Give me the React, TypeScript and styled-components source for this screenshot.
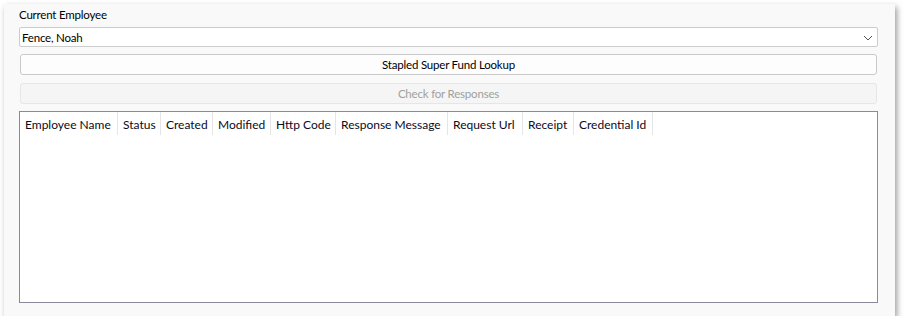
import React from "react";
import styled, { createGlobalStyle } from "styled-components";

const GlobalStyle = createGlobalStyle`
  html, body {
    margin: 0;
    padding: 0;
    background: #ffffff;
  }
  body {
    font-family: "Segoe UI", Lato, "Noto Sans", sans-serif;
    font-size: 11.5px;
    letter-spacing: -0.2px;
    color: #000000;
  }
`;

const Window = styled.div`
  box-sizing: border-box;
  margin: 4px 0 0 4px;
  width: 891px;
  height: 312px;
  background: #f9f9f9;
  box-shadow: 2px 3px 6px rgba(0, 0, 0, 0.4);
  padding: 3px 17px 13px 15px;
  display: flex;
  flex-direction: column;
`;

const Label = styled.div`
  line-height: 16px;
  height: 16px;
  margin-bottom: 4px;
  color: #000;
`;

const Combo = styled.div`
  box-sizing: border-box;
  height: 20px;
  border: 1px solid #cccccc;
  border-radius: 2px;
  background: #ffffff;
  display: flex;
  align-items: center;
  justify-content: space-between;
  padding: 1px 3px 0 2px;
  margin-bottom: 7px;
  line-height: 16px;
`;

const Chevron = styled.svg`
  width: 10px;
  height: 6px;
  margin-right: 1px;
`;

const Button = styled.div<{ $disabled?: boolean }>`
  box-sizing: border-box;
  height: 21px;
  margin: 0 1px;
  border: 1px solid ${(p) => (p.$disabled ? "#e6e6e6" : "#c9c9c9")};
  border-radius: 3px;
  background: ${(p) => (p.$disabled ? "#f5f5f5" : "#fdfdfd")};
  color: ${(p) => (p.$disabled ? "#a0a0a0" : "#000000")};
  display: flex;
  align-items: center;
  justify-content: center;
  padding-top: 1px;
  line-height: 16px;
`;

const Gap = styled.div<{ $h: number }>`
  height: ${(p) => p.$h}px;
  flex: none;
`;

const Grid = styled.div`
  box-sizing: border-box;
  flex: 1;
  border: 1px solid #8c8a9a;
  background: #ffffff;
  display: flex;
  flex-direction: column;
`;

const HeaderRow = styled.div`
  display: flex;
  height: 23px;
`;

const HeaderCell = styled.div<{ $w: number }>`
  box-sizing: border-box;
  width: ${(p) => p.$w}px;
  flex: none;
  border-right: 1px solid #e5e5e5;
  padding: 1px 0 0 5px;
  display: flex;
  align-items: center;
  white-space: nowrap;
  overflow: hidden;
  font-size: 12px;
  letter-spacing: 0;
  color: #0a0a1e;
`;

const columns: [string, number][] = [
  ["Employee Name", 98],
  ["Status", 43],
  ["Created", 52],
  ["Modified", 58],
  ["Http Code", 65],
  ["Response Message", 112],
  ["Request Url", 75],
  ["Receipt", 51],
  ["Credential Id", 79],
];

export default function App() {
  return (
    <>
      <GlobalStyle />
      <Window>
        <Label>Current Employee</Label>
        <Combo>
          <span>Fence, Noah</span>
          <Chevron viewBox="0 0 10 6">
            <path d="M1 1 L5 5 L9 1" fill="none" stroke="#555" strokeWidth="1" />
          </Chevron>
        </Combo>
        <Button>Stapled Super Fund Lookup</Button>
        <Gap $h={8} />
        <Button $disabled>Check for Responses</Button>
        <Gap $h={7} />
        <Grid>
          <HeaderRow>
            {columns.map(([name, w]) => (
              <HeaderCell key={name} $w={w}>
                {name}
              </HeaderCell>
            ))}
          </HeaderRow>
        </Grid>
      </Window>
    </>
  );
}
